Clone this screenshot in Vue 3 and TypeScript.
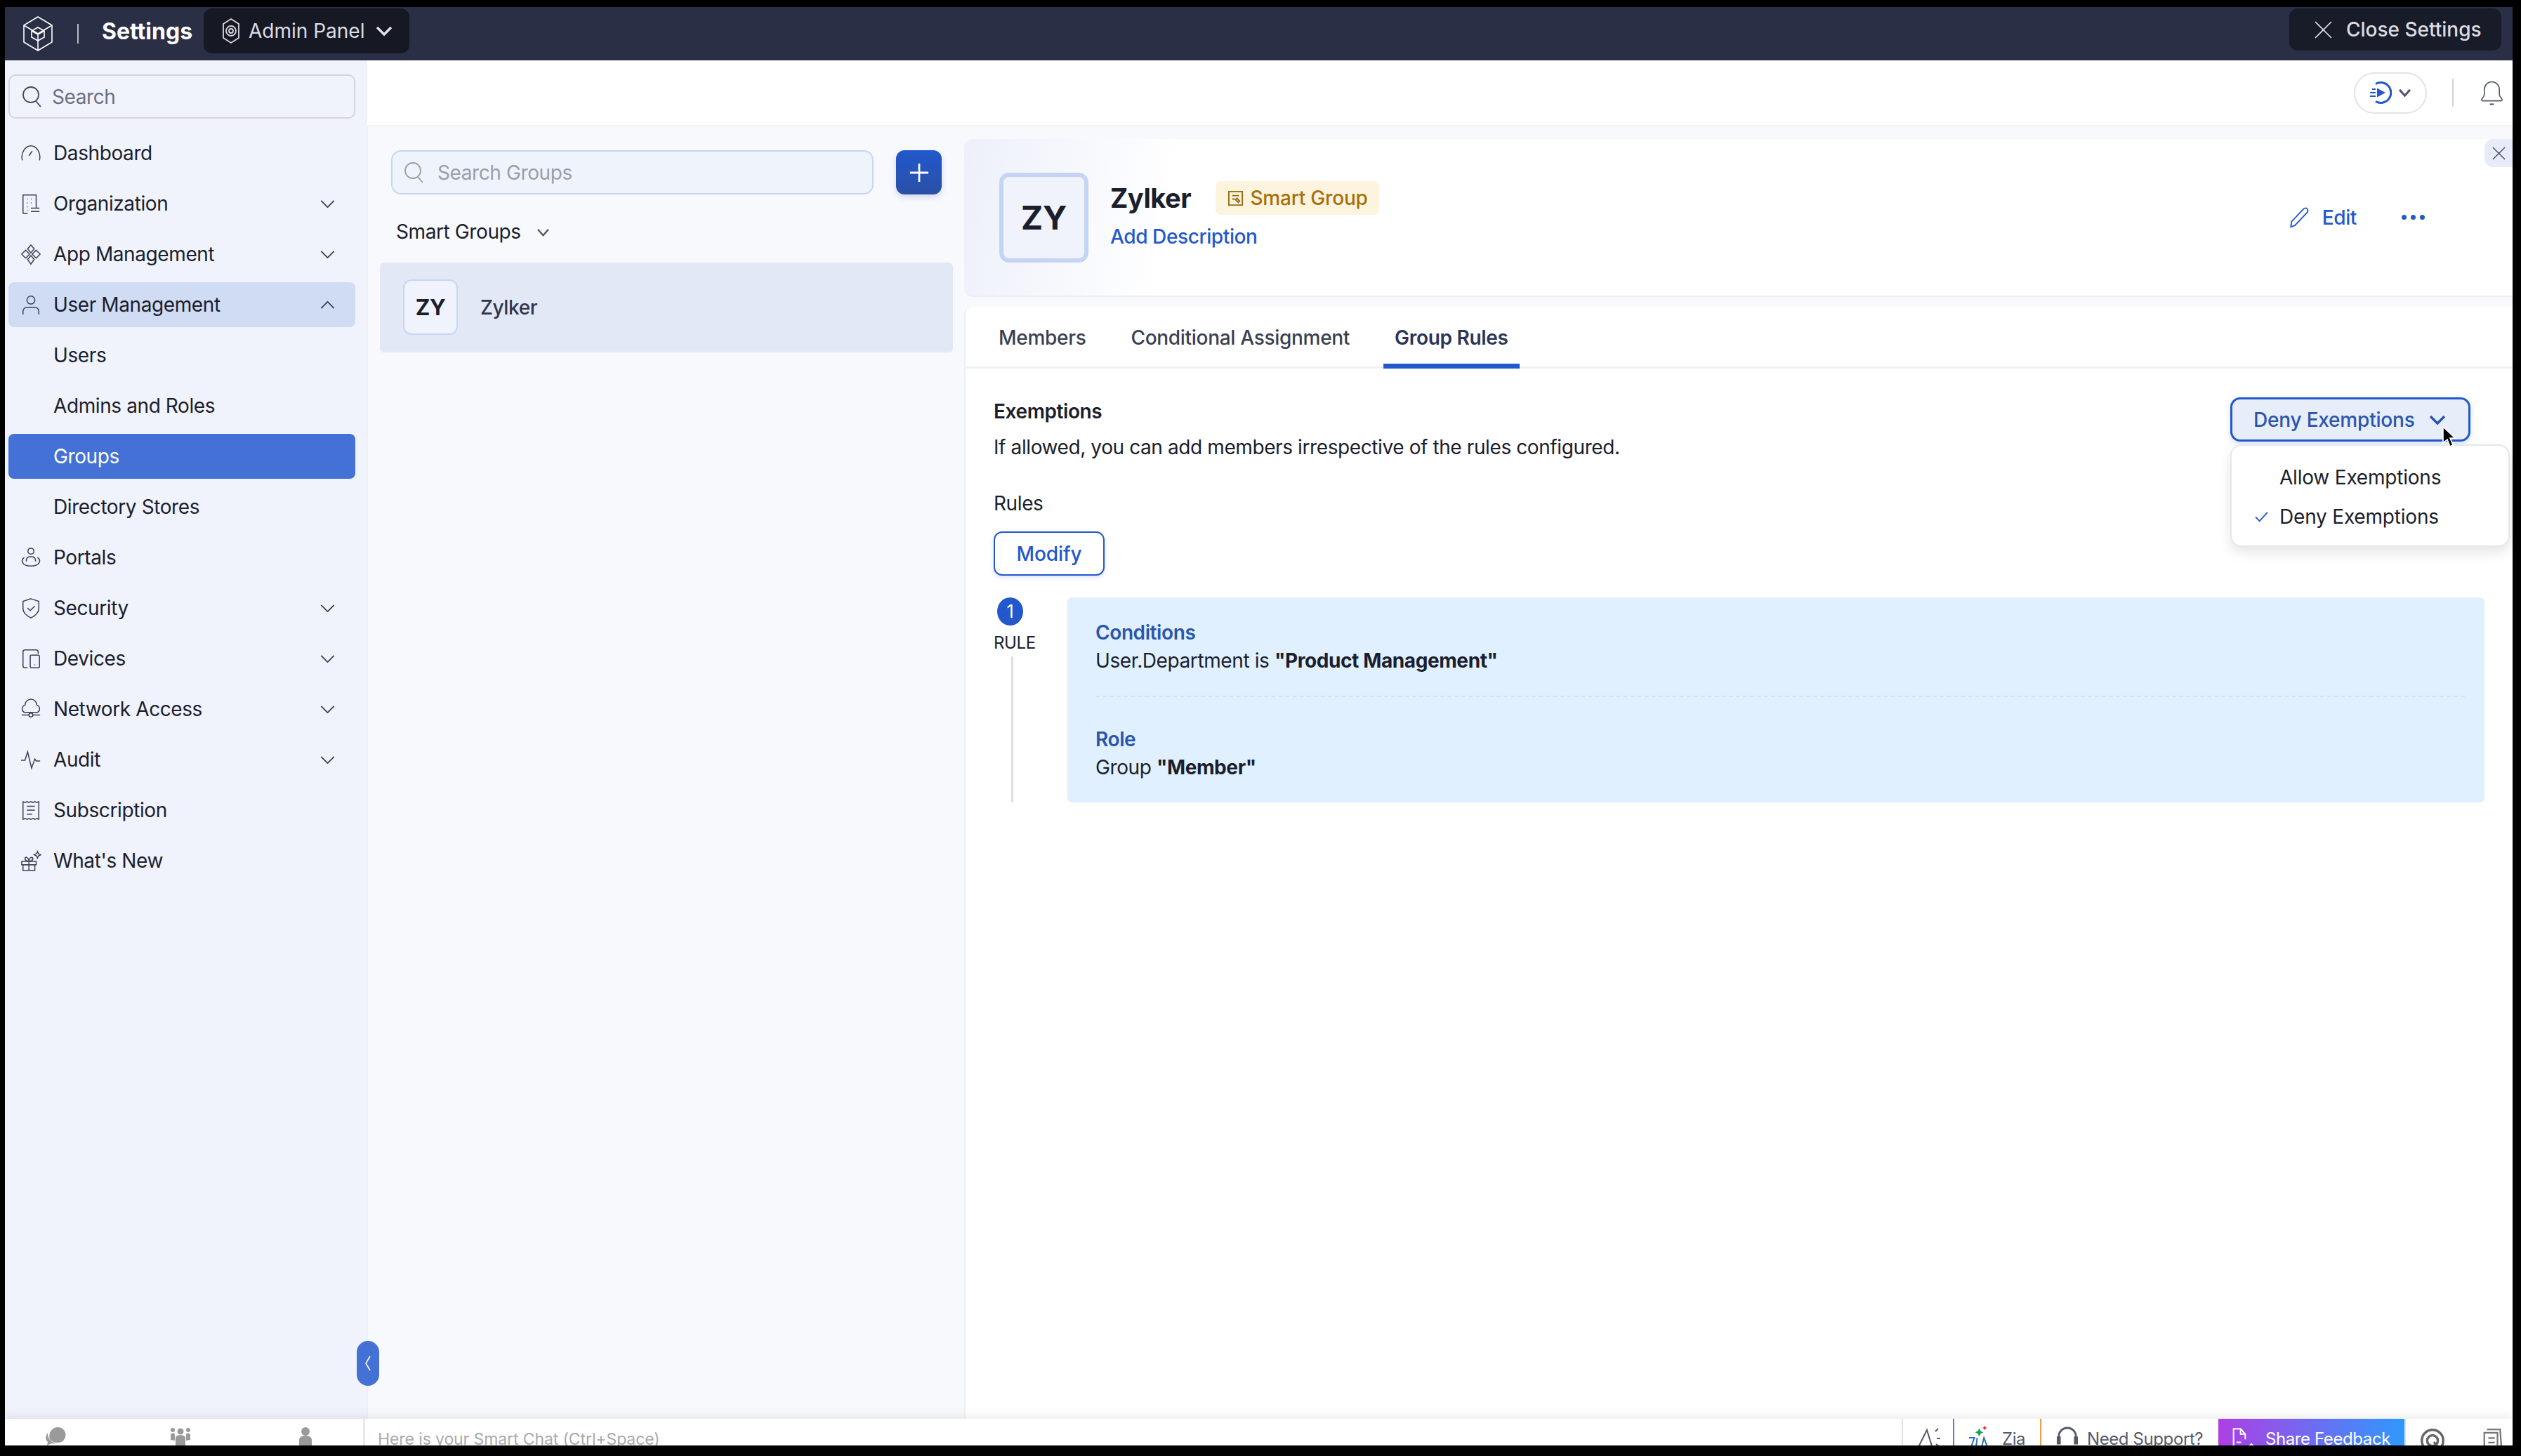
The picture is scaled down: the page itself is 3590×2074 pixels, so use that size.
<script setup lang="ts">
interface NavItem {
  label: string;
  icon?: string[];
  chevron?: "down" | "up";
  sub?: boolean;
  open?: boolean;
  active?: boolean;
}

const navItems: NavItem[] = [
  { label: "Dashboard", icon: ["M3 27C0 15 8 5 16 5s16 10 13 22", "M13 20l5-7"] },
  {
    label: "Organization",
    chevron: "down",
    icon: ["M4 31V3h20v20", "M4 31h7", "M10 9h1M16 9h1M10 15h1M16 15h1M10 21h1M10 27h1", "M16 23h13M16 28h13"],
  },
  {
    label: "App Management",
    chevron: "down",
    icon: ["M16 2l5 6-5 6-5-6z", "M8 10l6 6-6 6-6-6z", "M24 10l6 6-6 6-6-6z", "M16 18l5 6-5 7-5-7z"],
  },
  {
    label: "User Management",
    chevron: "up",
    open: true,
    icon: ["M16 3a6 6 0 1 1 0 12 6 6 0 0 1 0-12z", "M4 31v-5a6 6 0 0 1 6-6h12a6 6 0 0 1 6 6v5"],
  },
  { label: "Users", sub: true },
  { label: "Admins and Roles", sub: true },
  { label: "Groups", sub: true, active: true },
  { label: "Directory Stores", sub: true },
  {
    label: "Portals",
    icon: ["M16 2a4.5 4.5 0 1 1 0 9 4.5 4.5 0 0 1 0-9z", "M9 22v-2a6 6 0 0 1 6-5h2a6 6 0 0 1 6 5v2", "M6 16c-6 4-4 13 10 13s16-9 10-13"],
  },
  {
    label: "Security",
    chevron: "down",
    icon: ["M16 2l12 4v11c0 7-6 11-12 14C10 28 4 24 4 17V6z", "M11 16l4 4 7-7"],
  },
  {
    label: "Devices",
    chevron: "down",
    icon: ["M11 30H7a3 3 0 0 1-3-3V6a3 3 0 0 1 3-3h17a3 3 0 0 1 3 3v3", "M17 11h10a2 2 0 0 1 2 2v15a2 2 0 0 1-2 2H17a2 2 0 0 1-2-2V13a2 2 0 0 1 2-2z", "M22 25v1"],
  },
  {
    label: "Network Access",
    chevron: "down",
    icon: ["M6 21a6 6 0 0 1 1-11 9 9 0 0 1 18 0 6 6 0 0 1 1 11z", "M2 25h11M19 25h11", "M16 22a3 3 0 1 1 0 6 3 3 0 0 1 0-6z"],
  },
  {
    label: "Audit",
    chevron: "down",
    icon: ["M1 17h6l4-13 6 25 5-14 2 3h6"],
  },
  {
    label: "Subscription",
    icon: ["M4 3l3 1.5L10 3l3 1.5L16 3l3 1.5L22 3l3 1.5L28 3v27l-3-1.5-3 1.5-3-1.5-3 1.5-3-1.5-3 1.5-3-1.5L4 30z", "M10 10h12M10 16h12M10 22h8"],
  },
  {
    label: "What's New",
    icon: ["M2 17h22v5H2z", "M4 22h18v9H4z", "M13 17v14", "M13 17c-6 0-8-6-4-6 2 0 4 3 4 6 0-3 2-6 4-6 4 0 2 6-4 6z", "M26 2l1.5 3.5L31 7l-3.5 1.5L26 12l-1.5-3.5L21 7l3.5-1.5z"],
  },
];

const tabs = ["Members", "Conditional Assignment", "Group Rules"];
</script>

<template>
  <div class="frame">
    <div class="screen">
      <header class="topbar">
        <svg class="logo" viewBox="0 0 42 50" fill="none" stroke="#fff" stroke-width="1.6">
          <path d="M21 1l20 12v24L21 49 1 37V13z" />
          <path d="M1 13l20 12 20-12M21 25v24" />
          <path d="M21 16l9 5v9l-9 5-9-5v-9zM12 21l9 5 9-5" />
        </svg>
        <span class="bar-sep"></span>
        <span class="settings-title">Settings</span>
        <button class="panel-switch">
          <svg class="panel-ico" viewBox="0 0 26 38" fill="none" stroke="#d8d9de" stroke-width="1.8">
            <path d="M13 2l11 7v20l-11 7-11-7V9z" />
            <path d="M13 12a7 7 0 1 1 0 14 7 7 0 0 1 0-14z" />
            <path d="M13 16a3 3 0 1 1 0 6 3 3 0 0 1 0-6z" />
          </svg>
          <span>Admin Panel</span>
          <svg class="panel-caret" viewBox="0 0 24 16" fill="none" stroke="#e2e3e8" stroke-width="3.4">
            <path d="M2 3l10 10L22 3" />
          </svg>
        </button>
        <button class="close-settings">
          <svg viewBox="0 0 26 26" fill="none" stroke="#e0e1e6" stroke-width="1.7">
            <path d="M1 1l24 24M25 1L1 25" />
          </svg>
          <span>Close Settings</span>
        </button>
      </header>

      <div class="main">
        <aside class="sidebar">
          <div class="side-search">
            <svg viewBox="0 0 28 32" fill="none" stroke="#444a5c" stroke-width="1.8">
              <path d="M13 2a11 11 0 1 1 0 22 11 11 0 0 1 0-22z" />
              <path d="M20 22l7 8" />
            </svg>
            <span>Search</span>
          </div>
          <nav class="nav">
            <a
              v-for="item in navItems"
              :key="item.label"
              class="nav-row"
              :class="{ open: item.open, active: item.active }"
            >
              <svg v-if="item.icon" class="nav-ico" viewBox="0 0 32 33" fill="none" stroke="#3b4052" stroke-width="1.6">
                <path v-for="d in item.icon" :key="d" :d="d" />
              </svg>
              <span v-else class="nav-ico"></span>
              <span class="nav-label">{{ item.label }}</span>
              <svg v-if="item.chevron" class="nav-chev" viewBox="0 0 22 12" fill="none" stroke="#3b4052" stroke-width="2">
                <path :d="item.chevron === 'down' ? 'M1 1l10 10L21 1' : 'M1 11L11 1l10 10'" />
              </svg>
            </a>
          </nav>
          <button class="collapse">
            <svg viewBox="0 0 10 22" fill="none" stroke="#fff" stroke-width="1.6">
              <path d="M8 1L2 11l6 10" />
            </svg>
          </button>
        </aside>

        <div class="content">
          <div class="strip">
            <button class="play-pill">
              <svg class="play-ico" viewBox="0 0 33 34" fill="none" stroke="#2258cc" stroke-width="3">
                <path d="M10 4.5A14.5 14.5 0 1 1 10 29.5" />
                <path d="M12 10.5l12 6.5-12 6.5z" fill="#2258cc" stroke="none" />
                <path d="M5 12h5M2 17h8M2 22h8" stroke-width="2" />
              </svg>
              <svg class="play-caret" viewBox="0 0 20 14" fill="none" stroke="#555a68" stroke-width="3.4">
                <path d="M2 2l8 9 8-9" />
              </svg>
            </button>
            <span class="strip-sep"></span>
            <svg class="bell" viewBox="0 0 34 38" fill="none" stroke="#555a68" stroke-width="1.7">
              <path d="M2 29c0-2 4-3 4-8v-7a11 11 0 0 1 22 0v7c0 5 4 6 4 8 0 1-1 2-2 2H4c-1 0-2-1-2-2z" />
              <path d="M14 36h6" stroke-width="2.2" />
            </svg>
          </div>

          <div class="workspace">
            <section class="groups">
              <div class="groups-head">
                <div class="group-search">
                  <svg viewBox="0 0 28 32" fill="none" stroke="#9a9eaa" stroke-width="1.8">
                    <path d="M13 2a11 11 0 1 1 0 22 11 11 0 0 1 0-22z" />
                    <path d="M20 22l7 8" />
                  </svg>
                  <span>Search Groups</span>
                </div>
                <button class="add-btn">
                  <svg viewBox="0 0 30 30" fill="none" stroke="#fff" stroke-width="3">
                    <path d="M15 1v28M1 15h28" />
                  </svg>
                </button>
              </div>
              <div class="smart-label">
                <span>Smart Groups</span>
                <svg viewBox="0 0 20 14" fill="none" stroke="#555a68" stroke-width="2.6">
                  <path d="M2 2l8 9 8-9" />
                </svg>
              </div>
              <div class="group-row">
                <span class="group-avatar">ZY</span>
                <span class="group-name">Zylker</span>
              </div>
            </section>

            <section class="detail">
              <div class="detail-head">
                <span class="big-avatar">ZY</span>
                <div class="head-text">
                  <div class="head-title">
                    <span class="head-name">Zylker</span>
                    <span class="smart-tag">
                      <svg viewBox="0 0 26 26" fill="none" stroke="#9a6a12" stroke-width="2">
                        <path d="M3 3h20v20H3z" />
                        <path d="M8 9h10M8 14h4M15 13l4 4-2 2-4-4z" />
                      </svg>
                      Smart Group
                    </span>
                  </div>
                  <a class="add-desc">Add Description</a>
                </div>
                <a class="edit-link">
                  <svg viewBox="0 0 30 32" fill="none" stroke="#2258cc" stroke-width="2">
                    <path d="M2 30l1-8L21 3c2-2 5-2 6 0s1 4-1 6L8 28z" />
                  </svg>
                  Edit
                </a>
                <span class="more-dots"><i></i><i></i><i></i></span>
                <button class="head-close">
                  <svg viewBox="0 0 20 20" fill="none" stroke="#444a5c" stroke-width="1.4">
                    <path d="M1 1l18 18M19 1L1 19" />
                  </svg>
                </button>
              </div>

              <div class="detail-card">
                <div class="tabs">
                  <a v-for="(t, i) in tabs" :key="t" class="tab" :class="{ current: i === 2 }">{{ t }}</a>
                </div>
                <div class="body">
                  <div class="exempt">
                    <h3>Exemptions</h3>
                    <p>If allowed, you can add members irrespective of the rules configured.</p>
                    <button class="deny-btn">
                      <span>Deny Exemptions</span>
                      <svg viewBox="0 0 24 16" fill="none" stroke="#2a55ad" stroke-width="3.4">
                        <path d="M2 3l10 10L22 3" />
                      </svg>
                    </button>
                    <div class="deny-menu">
                      <div class="menu-item">Allow Exemptions</div>
                      <div class="menu-item">
                        <svg viewBox="0 0 20 16" fill="none" stroke="#2258cc" stroke-width="2">
                          <path d="M1 8l6 6L19 1" />
                        </svg>
                        Deny Exemptions
                      </div>
                    </div>
                    <svg class="cursor" viewBox="0 0 20 32">
                      <path d="M2 1v23l6-5 4 10 4-2-4-10h7z" fill="#000" stroke="#fff" stroke-width="1.6" />
                    </svg>
                  </div>
                  <div class="rules-title">Rules</div>
                  <button class="modify-btn">Modify</button>
                  <div class="rule">
                    <div class="rule-side">
                      <span class="rule-num">1</span>
                      <span class="rule-word">RULE</span>
                      <span class="rule-line"></span>
                    </div>
                    <div class="rule-card">
                      <div class="rule-head">Conditions</div>
                      <div class="rule-text">User.Department is <b>"Product Management"</b></div>
                      <div class="rule-dash"></div>
                      <div class="rule-head">Role</div>
                      <div class="rule-text">Group <b>"Member"</b></div>
                    </div>
                  </div>
                </div>
              </div>
            </section>
          </div>
        </div>
      </div>

      <footer class="bottom">
        <div class="chat-tabs">
          <svg viewBox="0 0 32 26" fill="#9a9a9a">
            <path d="M19 0a11 11 0 0 1 1 22c-5 0-9-1-12-5C5 9 11 0 19 0z" />
            <path d="M5 8c-4 5-3 10 0 13l-1 5 6-3c2 0 5 1 7 0-6-1-13-7-12-15z" />
          </svg>
          <svg viewBox="0 0 32 26" fill="#9a9a9a">
            <circle cx="16" cy="6" r="4.5" /><circle cx="5" cy="4" r="3" /><circle cx="27" cy="4" r="3" />
            <path d="M9 26V15c0-5 14-5 14 0v11zM2 18v-7c0-3 5-3 6-1v9zM30 18v-7c0-3-5-3-6-1v9z" />
          </svg>
          <svg viewBox="0 0 32 26" fill="#9a9a9a">
            <circle cx="16" cy="6" r="6" /><path d="M7 26v-8c0-8 18-8 18 0v8z" />
          </svg>
        </div>
        <div class="chat-hint">Here is your Smart Chat (Ctrl+Space)</div>
        <div class="foot-item foot-horn">
          <svg viewBox="0 0 34 38" fill="none" stroke="#555a68" stroke-width="2"><path d="M2 30L14 6l8 26zM26 8l4-4M28 18h5M27 26l4 3" /></svg>
        </div>
        <div class="foot-item foot-zia">
          <svg viewBox="0 0 32 40" fill="none" stroke="#2a6db5" stroke-width="2">
            <path d="M2 18h8l-6 16M14 18l-2 16M20 34l4-16 6 16" />
            <path d="M17 4l2 4 4 2-4 2-2 4-2-4-4-2 4-2z" fill="#16a34a" stroke="none" />
            <path d="M25 0l1 2.5 2.500 1-2.500 1-1 2.500-1-2.500-2.500-1 2.500-1z" fill="#e11d2e" stroke="none" />
          </svg>
          <span>Zia</span>
        </div>
        <div class="foot-item foot-help">
          <svg viewBox="0 0 34 40" fill="none" stroke="#555a68" stroke-width="3"><path d="M4 20v-4a13 13 0 0 1 26 0v4" /><path d="M4 16v12M30 16v12" stroke-width="6" /></svg>
          <span>Need Support?</span>
        </div>
        <div class="foot-share">
          <svg viewBox="0 0 36 44" fill="none" stroke="#fff" stroke-width="2.4"><path d="M20 38H2V2h12l8 9v9" /><path d="M14 2v9h8M7 25h8M7 32h6M24 38l8-10 3 2-8 10-4 2z" /></svg>
          <span>Share Feedback</span>
        </div>
        <div class="foot-end">
          <svg viewBox="0 0 36 44" fill="none" stroke="#666" stroke-width="3.6"><circle cx="18" cy="20" r="16" /><circle cx="18" cy="20" r="8" /><path d="M20 22l8 10" /></svg>
          <svg class="foot-notes" viewBox="0 0 32 44" fill="none" stroke="#777" stroke-width="2.4"><path d="M4 8h20v28H4zM8 3h20l2 28M10 16h10M10 23h10" /></svg>
        </div>
      </footer>
    </div>
  </div>
</template>

<style>
html,
body {
  margin: 0;
  background: #000;
}
</style>

<style scoped>
.frame {
  width: 3590px;
  height: 2074px;
  box-sizing: border-box;
  padding: 10px 12px 15px 7px;
  background: #000;
  font-family: Inter, "Noto Sans", sans-serif;
  font-size: 28px;
  letter-spacing: -0.4px;
  color: #1b1e2c;
  overflow: hidden;
}

button {
  font-family: inherit;
  letter-spacing: inherit;
  border: none;
  padding: 0;
  background: none;
}

.screen {
  height: 100%;
  display: flex;
  flex-direction: column;
  background: #fff;
}

/* top bar */
.topbar {
  height: 76px;
  flex-shrink: 0;
  display: flex;
  align-items: center;
  background: #2a2f45;
  padding: 0 16px 0 26px;
  box-sizing: border-box;
}

.logo {
  width: 42px;
  height: 50px;
}

.bar-sep {
  width: 2px;
  height: 28px;
  margin: 0 33px 0 35px;
  background: #b9bbc4;
}

.settings-title {
  width: 145px;
  margin-top: -8px;
  font-size: 32px;
  font-weight: 700;
  letter-spacing: 0;
  color: #fff;
}

.panel-switch {
  align-self: flex-start;
  margin-top: 2px;
  width: 293px;
  height: 64px;
  display: flex;
  align-items: center;
  padding-left: 26px;
  box-sizing: border-box;
  border-radius: 12px;
  background: #161824;
  color: #dcdde2;
  font-size: 28px;
  letter-spacing: 0;
}

.panel-ico {
  width: 26px;
  height: 38px;
  margin-right: 12px;
}

.panel-caret {
  width: 24px;
  height: 16px;
  margin-left: 16px;
}

.close-settings {
  align-self: flex-start;
  margin: 2px 0 0 auto;
  width: 302px;
  height: 60px;
  display: flex;
  align-items: center;
  gap: 20px;
  padding-left: 36px;
  box-sizing: border-box;
  border-radius: 12px;
  background: #181b28;
  color: #dcdde2;
  font-size: 28px;
  font-weight: 500;
  letter-spacing: 0;
}

.close-settings svg {
  width: 25px;
  height: 25px;
}

.main {
  flex: 1;
  min-height: 0;
  display: flex;
}

/* sidebar */
.sidebar {
  position: relative;
  width: 516px;
  flex-shrink: 0;
  box-sizing: border-box;
  padding: 20px 17px 0 5px;
  background: #f0f3fc;
}

.side-search {
  height: 63px;
  display: flex;
  align-items: center;
  gap: 15px;
  padding-left: 17px;
  box-sizing: border-box;
  border: 2px solid #d3d5da;
  border-radius: 10px;
  color: #6b7080;
  margin-bottom: 17px;
}

.side-search svg {
  width: 28px;
  height: 32px;
}

.nav {
  display: flex;
  flex-direction: column;
  gap: 8px;
}

.nav-row {
  height: 64px;
  display: flex;
  align-items: center;
  padding-left: 17px;
  border-radius: 8px;
}

.nav-row.open {
  background: #d0dcf4;
}

.nav-row.active {
  background: #4471d6;
  color: #fff;
}

.nav-ico {
  width: 30px;
  height: 31px;
  margin-right: 17px;
  flex-shrink: 0;
}

.nav-chev {
  width: 21px;
  height: 11px;
  margin-left: auto;
  margin-right: 29px;
}

.collapse {
  position: absolute;
  left: 501px;
  top: 1824px;
  width: 32px;
  height: 64px;
  border-radius: 16px;
  background: #4471d6;
  display: flex;
  align-items: center;
  justify-content: center;
}

.collapse svg {
  width: 10px;
  height: 22px;
}

/* content */
.content {
  flex: 1;
  min-width: 0;
  display: flex;
  flex-direction: column;
  background: #f8f9fd;
}

.strip {
  height: 94px;
  flex-shrink: 0;
  box-sizing: border-box;
  display: flex;
  align-items: center;
  background: #fff;
  border-bottom: 2px solid #f0f1f5;
  padding: 0 13px 0 0;
  justify-content: flex-end;
}

.play-pill {
  width: 104px;
  height: 59px;
  display: flex;
  align-items: center;
  gap: 9px;
  padding-left: 19px;
  box-sizing: border-box;
  border: 2px solid #e2e3e6;
  border-radius: 30px;
}

.play-ico {
  width: 33px;
  height: 34px;
}

.play-caret {
  width: 19px;
  height: 13px;
}

.strip-sep {
  width: 2px;
  height: 40px;
  margin: 0 38px 0 36px;
  background: #d3d4d8;
}

.bell {
  width: 33px;
  height: 38px;
}

.workspace {
  flex: 1;
  min-height: 0;
  display: flex;
}

/* group list */
.groups {
  width: 850px;
  flex-shrink: 0;
  box-sizing: border-box;
  padding: 34px 16px 0 17px;
  border-left: 1px solid #eceef4;
}

.groups-head {
  display: flex;
  gap: 32px;
  padding: 0 16px;
}

.group-search {
  flex: 1;
  height: 63px;
  box-sizing: border-box;
  display: flex;
  align-items: center;
  gap: 20px;
  padding-left: 16px;
  border: 2px solid #c5d7f4;
  border-radius: 14px;
  background: #eff3fb;
  color: #9a9eaa;
}

.group-search svg {
  width: 28px;
  height: 32px;
}

.add-btn {
  width: 65px;
  height: 63px;
  border-radius: 12px;
  background: linear-gradient(180deg, #2158cc, #2a50a5);
  box-shadow: 0 4px 8px rgba(42, 80, 165, 0.18);
  display: flex;
  align-items: center;
  justify-content: center;
}

.add-btn svg {
  width: 28px;
  height: 28px;
}

.smart-label {
  height: 40px;
  margin: 33px 0 24px 23px;
  display: flex;
  align-items: center;
  gap: 22px;
}

.smart-label svg {
  width: 19px;
  height: 13px;
  margin-top: 3px;
}

.group-row {
  height: 129px;
  display: flex;
  align-items: center;
  padding-left: 33px;
  box-sizing: border-box;
  background: #e2e8f6;
  border-radius: 6px;
  border-bottom: 2px solid #eef0f6;
}

.group-avatar {
  width: 78px;
  height: 79px;
  box-sizing: border-box;
  display: flex;
  align-items: center;
  justify-content: center;
  border: 2px solid #c5d7f4;
  border-radius: 12px;
  background: #f0f3fc;
  font-size: 31px;
  font-weight: 700;
}

.group-name {
  margin-left: 32px;
  font-weight: 500;
  color: #30354a;
}

/* detail */
.detail {
  flex: 1;
  min-width: 0;
  padding-top: 18px;
  display: flex;
  flex-direction: column;
}

.detail-head {
  position: relative;
  height: 225px;
  flex-shrink: 0;
  display: flex;
  align-items: center;
  box-sizing: border-box;
  padding-left: 50px;
  border-radius: 12px 0 0 12px;
  background: linear-gradient(100deg, #edf0fa 0, #fff 14%);
  border-bottom: 2px solid #eceef4;
}

.big-avatar {
  width: 127px;
  height: 128px;
  box-sizing: border-box;
  display: flex;
  align-items: center;
  justify-content: center;
  border: 6px solid #c3d5f3;
  border-radius: 14px;
  background: #f0f3fc;
  font-size: 47px;
  font-weight: 700;
}

.head-text {
  margin-left: 31px;
  padding-bottom: 7px;
  display: flex;
  flex-direction: column;
  gap: 14px;
}

.head-title {
  display: flex;
  align-items: center;
  gap: 35px;
}

.head-name {
  font-size: 38px;
  font-weight: 700;
}

.smart-tag {
  height: 48px;
  display: flex;
  align-items: center;
  gap: 8px;
  padding: 0 16px;
  border-radius: 8px;
  background: #fdf4e0;
  color: #a86f08;
  letter-spacing: -0.2px;
  font-weight: 500;
}

.smart-tag svg {
  width: 25px;
  height: 25px;
}

.add-desc {
  color: #2258cc;
  font-weight: 500;
}

.edit-link {
  margin-left: auto;
  display: flex;
  align-items: center;
  gap: 18px;
  color: #2258cc;
  font-weight: 500;
}

.edit-link svg {
  width: 29px;
  height: 30px;
}

.more-dots {
  margin: 0 125px 0 64px;
  display: flex;
  gap: 6px;
}

.more-dots i {
  width: 7px;
  height: 7px;
  border-radius: 50%;
  background: #2258cc;
}

.head-close {
  position: absolute;
  right: 0;
  top: 0;
  width: 40px;
  height: 40px;
  border-radius: 12px 0 0 12px;
  background: #e8ecf8;
  display: flex;
  align-items: center;
  justify-content: center;
}

.head-close svg {
  width: 19px;
  height: 19px;
}

.detail-card {
  flex: 1;
  min-height: 0;
  margin-top: 14px;
  border-radius: 12px 0 0 0;
  background: #fff;
  border-left: 2px solid #eef0f5;
}

.tabs {
  height: 88px;
  display: flex;
  box-sizing: border-box;
  border-bottom: 3px solid #f0f1f4;
  padding-left: 31px;
}

.tab {
  height: 88px;
  box-sizing: border-box;
  display: flex;
  align-items: center;
  padding: 0 16px;
  margin-right: 32px;
  letter-spacing: -0.3px;
  color: #3a3f50;
  font-weight: 500;
}

.tab.current {
  color: #2b3558;
  font-weight: 600;
  border-bottom: 7px solid #2258cc;
  padding-top: 7px;
}

.body {
  padding: 41px 40px 0 40px;
}

.exempt {
  position: relative;
}

.exempt h3 {
  margin: 0;
  font-size: 28px;
  line-height: 40px;
  font-weight: 600;
}

.exempt p {
  margin: 11px 0 0;
  line-height: 40px;
}

.deny-btn {
  position: absolute;
  left: 1761px;
  top: 0;
  width: 342px;
  height: 63px;
  box-sizing: border-box;
  display: flex;
  align-items: center;
  gap: 20px;
  padding-left: 30px;
  border: 3px solid #2258cc;
  border-radius: 14px;
  background: #e8edfa;
  color: #2a55ad;
  font-size: 28px;
  letter-spacing: -0.2px;
  font-weight: 500;
  box-shadow: 0 3px 8px rgba(34, 88, 204, 0.2);
}

.deny-btn svg {
  width: 24px;
  height: 16px;
}

.deny-menu {
  position: absolute;
  left: 1761px;
  top: 67px;
  width: 398px;
  height: 146px;
  box-sizing: border-box;
  padding: 17px 0 0 68px;
  border: 2px solid #e6e7ea;
  border-radius: 16px;
  background: #fff;
  box-shadow: 0 8px 18px rgba(0, 0, 0, 0.1);
  letter-spacing: -0.2px;
  z-index: 2;
}

.menu-item {
  position: relative;
  height: 56px;
  display: flex;
  align-items: center;
}

.menu-item svg {
  position: absolute;
  left: -35px;
  width: 19px;
  height: 15px;
}

.cursor {
  position: absolute;
  left: 2062px;
  top: 41px;
  width: 20px;
  height: 32px;
  z-index: 3;
}

.rules-title {
  margin-top: 40px;
  line-height: 40px;
}

.modify-btn {
  display: block;
  margin-top: 20px;
  width: 158px;
  height: 63px;
  box-sizing: border-box;
  border: 2px solid #2258cc;
  border-radius: 12px;
  background: #fff;
  color: #2258cc;
  font-size: 28px;
  letter-spacing: -0.1px;
  font-weight: 500;
  box-shadow: 0 3px 6px rgba(34, 88, 204, 0.15);
}

.rule {
  margin-top: 31px;
  display: flex;
  width: 2123px;
}

.rule-side {
  width: 105px;
  flex-shrink: 0;
  display: flex;
  flex-direction: column;
  align-items: flex-start;
}

.rule-num {
  width: 37px;
  height: 40px;
  margin-left: 5px;
  border-radius: 50%;
  background: #2258cc;
  color: #fff;
  font-size: 25px;
  display: flex;
  align-items: center;
  justify-content: center;
}

.rule-word {
  margin-top: 8px;
  font-size: 24px;
  line-height: 34px;
}

.rule-line {
  flex: 1;
  width: 3px;
  margin: 2px 0 0 25px;
  background: #dedfe3;
}

.rule-card {
  flex: 1;
  height: 292px;
  box-sizing: border-box;
  padding: 30px 28px 0 40px;
  border-radius: 6px;
  background: #e0f0fe;
}

.rule-head {
  line-height: 40px;
  font-weight: 600;
  color: #2a55ad;
}

.rule-text {
  line-height: 40px;
  color: #1b1e2c;
}

.rule-text b {
  font-weight: 700;
}

.rule-dash {
  margin: 30px 0 40px;
  border-top: 2px dashed #d9e2ea;
}

/* bottom bar */
.bottom {
  height: 38px;
  flex-shrink: 0;
  position: relative;
  display: flex;
  overflow: hidden;
  background: #fff;
  box-shadow: 0 -6px 10px rgba(60, 60, 70, 0.08);
  color: #555a68;
  font-size: 24px;
  z-index: 1;
}

.chat-tabs {
  width: 513px;
  flex-shrink: 0;
  box-sizing: border-box;
  padding: 12px 0 0 56px;
  display: flex;
  gap: 146px;
  border-right: 3px solid #e9e9ec;
}

.chat-tabs svg {
  width: 32px;
  height: 26px;
}

.chat-hint {
  flex: 1;
  padding: 9px 0 0 18px;
  color: #aaa;
  font-size: 23px;
  letter-spacing: -0.1px;
  line-height: 40px;
  white-space: nowrap;
}

.foot-item {
  display: flex;
  gap: 18px;
  padding-top: 9px;
  box-sizing: border-box;
  white-space: nowrap;
  line-height: 40px;
}

.foot-item svg {
  height: 40px;
  flex-shrink: 0;
}

.foot-horn {
  width: 75px;
  padding-left: 20px;
  border-left: 2px solid #e3e3e6;
  border-right: 2px solid #6a6ff0;
}

.foot-horn svg {
  width: 34px;
}

.foot-zia {
  width: 124px;
  padding-left: 19px;
  border-right: 2px solid #ee9a4d;
}

.foot-zia svg {
  width: 31px;
}

.foot-help {
  width: 252px;
  padding-left: 21px;
  gap: 12px;
}

.foot-help svg {
  width: 32px;
}

.foot-share {
  width: 265px;
  flex-shrink: 0;
  box-sizing: border-box;
  display: flex;
  gap: 17px;
  padding: 9px 0 0 20px;
  background: linear-gradient(90deg, #ae3fe4, #2f98fe);
  color: #fff;
  line-height: 40px;
  white-space: nowrap;
}

.foot-share svg {
  width: 30px;
  height: 38px;
  margin-top: 3px;
  flex-shrink: 0;
}

.foot-end {
  width: 154px;
  flex-shrink: 0;
  box-sizing: border-box;
  display: flex;
  gap: 52px;
  padding: 12px 0 0 20px;
  border-left: 2px solid #dfe4ea;
}

.foot-end svg {
  width: 36px;
  height: 42px;
  flex-shrink: 0;
}

.foot-end .foot-notes {
  width: 30px;
}
</style>
